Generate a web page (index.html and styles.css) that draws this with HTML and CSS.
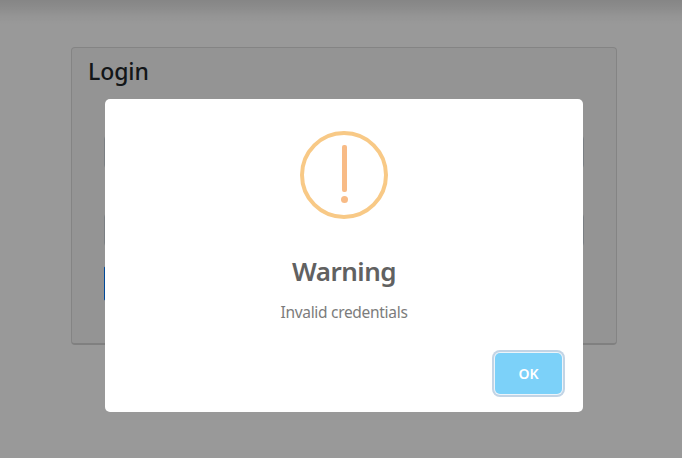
FILE: index.html
```html
<!DOCTYPE html>
<html lang="en">
<head>
<meta charset="utf-8">
<title>Login</title>
<link rel="stylesheet" href="styles.css">
</head>
<body>
<main class="page">
  <section class="card">
    <h1 class="card-title">Login</h1>
    <form class="form">
      <input class="field" type="text">
      <input class="field" type="password">
      <button class="submit" type="button"></button>
    </form>
  </section>
</main>
<div class="overlay">
  <div class="modal" role="dialog">
    <svg class="icon" width="88" height="88" viewBox="0 0 88 88">
      <circle cx="44" cy="44" r="42" fill="none" stroke="#f8c986" stroke-width="4"/>
      <rect x="42" y="14" width="5" height="47" rx="2" fill="#f8bb86"/>
      <circle cx="44.5" cy="68.5" r="3.5" fill="#f8bb86"/>
    </svg>
    <h2 class="modal-title">Warning</h2>
    <p class="modal-text">Invalid credentials</p>
    <div class="modal-footer"><button class="ok" type="button">OK</button></div>
  </div>
</div>
</body>
</html>
```
FILE: styles.css
```css
* { box-sizing: border-box; }
html, body { height: 100%; }
body {
  margin: 0;
  overflow: hidden;
  background: #fff;
  color: #212529;
  font-family: "Segoe UI", "Noto Sans", sans-serif;
}
.page {
  height: 458px;
  padding: 47px 65px 0 71px;
  background: linear-gradient(#dfdfdf, #e8e8e8 7px, #f8f8f8 16px, #fff 24px);
}
.card {
  height: 298px;
  padding: 8px 32px 0;
  background: #f7f7f7;
  border: 1px solid #dcdcdc;
  border-bottom: 2px solid #d6d6d6;
  border-radius: 4px;
}
.card-title {
  margin: 0 0 0 -16px;
  font-size: 23px;
  line-height: 31px;
  font-weight: 500;
  letter-spacing: -0.1px;
}
.form {
  display: flex;
  flex-direction: column;
  padding-top: 48px;
}
.field {
  width: 100%;
  height: 34px;
  margin: 0 0 44px;
  border: 1px solid #ced4da;
  border-radius: 4px;
  background: #fff;
}
.submit {
  width: 80px;
  height: 35px;
  margin-top: -25px;
  border: 1px solid #007bff;
  border-radius: 2px;
  background: #007bff;
}
.overlay {
  position: absolute;
  inset: 0;
  display: flex;
  justify-content: center;
  padding: 99px 0 0 6px;
  background: rgba(0, 0, 0, 0.4);
}
.modal {
  display: flex;
  flex-direction: column;
  align-items: center;
  width: 478px;
  height: 313px;
  padding-top: 32px;
  background: #fff;
  border-radius: 5px;
}
.icon { flex: none; }
.modal-title {
  margin: 34px 0 0;
  font-size: 26px;
  line-height: 36px;
  font-weight: 600;
  letter-spacing: -0.5px;
  color: #616161;
}
.modal-text {
  margin: 12px 0 0;
  font-size: 15.5px;
  line-height: 22px;
  letter-spacing: -0.3px;
  color: #7c7c7c;
}
.modal-footer {
  align-self: stretch;
  display: flex;
  justify-content: flex-end;
  margin-top: 30px;
  padding-right: 21px;
}
.ok {
  width: 67px;
  height: 41px;
  padding: 0;
  border: 0;
  border-radius: 5px;
  background: #7cd1f9;
  box-shadow: 0 0 0 1px #edf4fa, 0 0 0 3px #c2d4e5;
  color: #fff;
  font: 600 14px/41px "Segoe UI", "Noto Sans", sans-serif;
}
```
